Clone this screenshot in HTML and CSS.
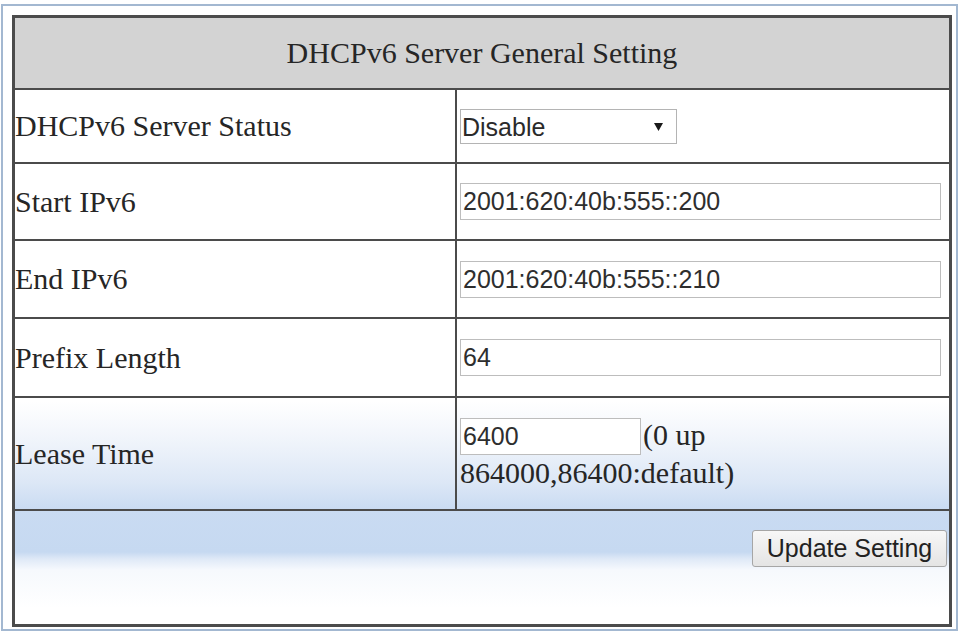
FILE: index.html
```html
<!DOCTYPE html>
<html lang="en">
<head>
<meta charset="utf-8">
<title>DHCPv6 Server General Setting</title>
<link rel="stylesheet" href="styles.css">
</head>
<body>
<div class="frame">
  <form class="settings">
    <div class="cell head">DHCPv6 Server General Setting</div>

    <div class="cell label">DHCPv6 Server Status</div>
    <div class="cell value">
      <span class="select-wrap">
        <select class="select" name="status">
          <option>Disable</option>
          <option>Enable</option>
        </select>
        <svg class="caret" width="9" height="8" viewBox="0 0 9 8" aria-hidden="true"><path d="M0 0H9L4.5 8Z" fill="#1a1a1a"/></svg>
      </span>
    </div>

    <div class="cell label">Start IPv6</div>
    <div class="cell value"><input class="field wide" type="text" value="2001:620:40b:555::200"></div>

    <div class="cell label">End IPv6</div>
    <div class="cell value"><input class="field wide" type="text" value="2001:620:40b:555::210"></div>

    <div class="cell label">Prefix Length</div>
    <div class="cell value"><input class="field wide" type="text" value="64"></div>

    <div class="cell label">Lease Time</div>
    <div class="cell value">
      <div class="lease"><input class="field short" type="text" value="6400">(0 up 864000,86400:default)</div>
    </div>

    <div class="cell actions"><button class="btn" type="button">Update Setting</button></div>
  </form>
</div>
</body>
</html>
```

FILE: styles.css
```css
html, body {
  margin: 0;
  padding: 0;
  background: #fff;
}

.frame {
  box-sizing: border-box;
  width: 957px;
  height: 627px;
  margin: 4px 0 0 1px;
  padding: 9px 0 0 9px;
  border: 2px solid #a3b8d1;
  background: #fff;
}

.settings {
  box-sizing: border-box;
  width: 940px;
  margin: 0;
  display: grid;
  grid-template-columns: 442px 492px;
  grid-template-rows: 72px 74px 77px 78px 79px 113px 113px;
  border: 3px solid #4b4b4b;
  font-family: "Liberation Serif", "Times New Roman", serif;
  font-size: 30px;
  color: #262626;
  background: linear-gradient(to bottom,
    #ffffff 0,
    #ffffff 383px,
    #f1f5fb 420px,
    #dce7f6 465px,
    #c9dbf2 492px,
    #c6d9f1 534px,
    #dfe9f7 541px,
    #f6f9fd 552px,
    #ffffff 590px);
}

.cell {
  box-sizing: border-box;
  display: flex;
  align-items: center;
  border-bottom: 2px solid #4b4b4b;
  min-width: 0;
}

.head {
  grid-column: 1 / 3;
  justify-content: center;
  background: #d3d3d3;
}

.label {
  border-right: 2px solid #4b4b4b;
  padding-left: 0;
  white-space: nowrap;
}

.value {
  padding-left: 3px;
}

.select-wrap {
  position: relative;
  display: inline-block;
  width: 217px;
  height: 35px;
}

.select {
  box-sizing: border-box;
  width: 217px;
  height: 35px;
  margin: 0;
  padding: 0 0 0 1px;
  appearance: none;
  -webkit-appearance: none;
  border: 1px solid #b4b4b4;
  border-radius: 0;
  background: #fff;
  font-family: "Liberation Sans", Arial, sans-serif;
  font-size: 25px;
  color: #2a2a2a;
}

.caret {
  position: absolute;
  left: 194px;
  top: 14px;
  pointer-events: none;
}

.field {
  box-sizing: border-box;
  height: 37px;
  margin: 0;
  padding: 0 2px;
  border: 1px solid #bdbdbd;
  border-radius: 0;
  background: #fff;
  font-family: "Liberation Sans", Arial, sans-serif;
  font-size: 25px;
  color: #2e2e2e;
  outline: none;
}

.wide {
  width: 481px;
}

.short {
  width: 181px;
  margin-right: 2px;
}

.lease {
  line-height: 36px;
}

.actions {
  grid-column: 1 / 3;
  align-items: flex-start;
  justify-content: flex-end;
  padding: 19px 2px 0 0;
  border-bottom: 0;
}

.btn {
  box-sizing: border-box;
  width: 195px;
  height: 37px;
  margin: 0;
  padding: 0;
  border: 1px solid #a6a6a6;
  border-radius: 3px;
  background: linear-gradient(to bottom, #f7f7f7, #e4e4e4);
  font-family: "Liberation Sans", Arial, sans-serif;
  font-size: 25px;
  color: #222;
}
```
